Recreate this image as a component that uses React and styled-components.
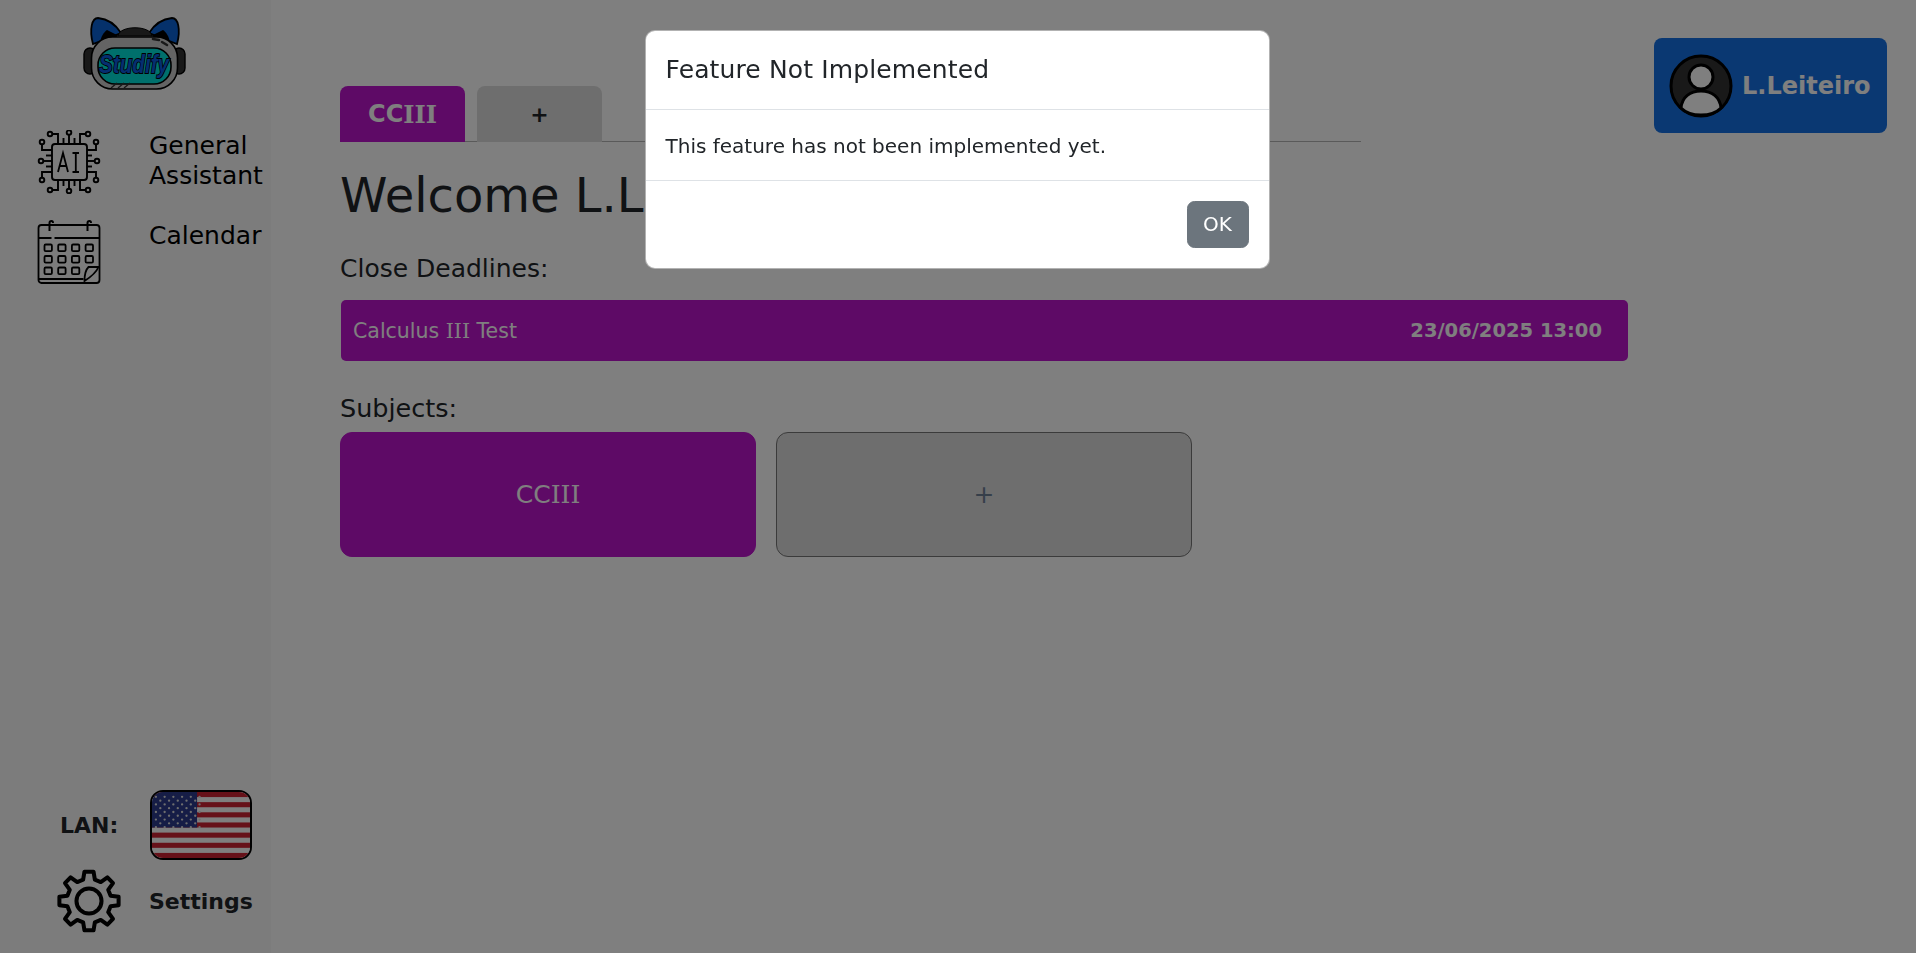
import styled, { createGlobalStyle } from 'styled-components'

const GlobalStyle = createGlobalStyle`
  html, body {
    margin: 0;
    padding: 0;
    height: 100%;
    background: #fff;
    font-family: "DejaVu Sans", Verdana, sans-serif;
    color: #212529;
  }
  * { box-sizing: border-box; }
`

function Logo() {
  return (
    <svg width="104" height="73" viewBox="0 0 104 73">
      <path d="M10 27 C6 12 9 1 15 1 C25 2 33 8 38 16 Z" fill="#0a62d6" stroke="#000" strokeWidth="1.8" />
      <path d="M94 27 C98 12 95 1 89 1 C79 2 71 8 66 16 Z" fill="#0a62d6" stroke="#000" strokeWidth="1.8" />
      <path d="M17 26 C18 19 21 15 24 13 L36 19 Z" fill="#000" />
      <path d="M87 26 C86 19 83 15 80 13 L68 19 Z" fill="#000" />
      <path d="M35 19 C36 8 68 8 69 19 Z" fill="#333" stroke="#000" />
      <rect x="1" y="31" width="12" height="26" rx="6" fill="#333" stroke="#000" strokeWidth="1.4" />
      <rect x="90" y="31" width="12" height="26" rx="6" fill="#333" stroke="#000" strokeWidth="1.4" />
      <rect x="8.5" y="20" width="86" height="52" rx="21" fill="#c8c8c8" stroke="#000" strokeWidth="1.6" />
      <rect x="15" y="31" width="73" height="36" rx="17" fill="#00e0d8" stroke="#000" strokeWidth="1.6" />
      <path d="M70 22 l6 1 M79 25 l5 3" stroke="#333" strokeWidth="2.6" strokeLinecap="round" />
      <path d="M28 71 l6 -5 M35 71 l6 -5 M41 71 l6 -5" stroke="#333" strokeWidth="1.4" />
      <text x="16" y="56" fontFamily="Liberation Sans, sans-serif" fontWeight="700" fontStyle="italic" fontSize="25" textLength="70" lengthAdjust="spacingAndGlyphs" fill="#0a5ce0" stroke="#000" strokeWidth="1.8" paintOrder="stroke">Studify</text>
    </svg>
  )
}

function AiChipIcon() {
  const pins = [
    'M14.5 4 H20 V14', 'M31 4.5 V14', 'M47.5 4 H42 V14', 'M25.5 8 V14', 'M36.5 8 V14',
    'M14.5 60 H20 V50', 'M31 59.5 V50', 'M47.5 60 H42 V50', 'M25.5 56 V50', 'M36.5 56 V50',
    'M4 14.5 V20 H14', 'M5.5 31 H14', 'M4 47.5 V42 H14', 'M8 25.5 H14', 'M8 36.5 H14',
    'M58 14.5 V20 H49', 'M56.5 31 H49', 'M58 47.5 V42 H49', 'M54 25.5 H49', 'M54 36.5 H49',
  ]
  const dots = [[12, 4], [31, 2.5], [50, 4], [4, 12], [58, 12], [3, 31], [59, 31], [4, 50], [58, 50], [12, 60], [31, 61], [50, 60]]
  return (
    <svg width="64" height="64" viewBox="0 0 62 64" fill="none" stroke="#000" strokeWidth="1.9">
      {pins.map((d) => <path key={d} d={d} />)}
      {dots.map(([cx, cy]) => <circle key={`${cx}-${cy}`} cx={cx} cy={cy} r="2.3" />)}
      <rect x="14" y="14" width="35" height="36" rx="3" />
      <path d="M20 42 L25 23 L30 42 M21.6 36 H28.4 M34.5 23 H41 M37.8 23 V42 M34.5 42 H41" strokeWidth="1.8" />
    </svg>
  )
}

function CalendarIcon() {
  const cells = []
  for (let row = 0; row < 3; row++) {
    for (let col = 0; col < 4; col++) {
      if (row === 2 && col === 3) continue
      cells.push(<rect key={`${row}-${col}`} x={7 + col * 13.7} y={24.5 + row * 11.5} width="7.4" height="6.6" rx="1.2" />)
    }
  }
  return (
    <svg width="64" height="64" viewBox="0 0 63 64" fill="none" stroke="#000" strokeWidth="1.8">
      <rect x="1" y="5" width="61" height="58" rx="3" />
      <path d="M1 18 H14 M17 18 H62" />
      <path d="M12 11 V3 Q12 1 14 1 Q15.5 1 15.5 3 M50 11 V3 Q50 1 52 1 Q53.5 1 53.5 3" strokeWidth="2" />
      {cells}
      <path d="M47 61 Q47 51 51 47 L61 47 Q58 54 47 61 Z" />
      <path d="M1 59 H46" />
    </svg>
  )
}

function GearIcon() {
  return (
    <svg width="64" height="64" viewBox="0 0 24 24" fill="none" stroke="#000" strokeWidth="1.5" strokeLinejoin="round">
      <path d="M10.3 1 H13.7 L14.2 4 L16.4 4.9 L18.9 3.1 L21 5.3 L19.2 7.8 L20.1 10 L23.1 10.4 V13.6 L20.1 14 L19.2 16.2 L21 18.7 L18.9 20.9 L16.4 19.1 L14.2 20 L13.7 23 H10.3 L9.8 20 L7.6 19.1 L5.1 20.9 L3 18.7 L4.8 16.2 L3.9 14 L.9 13.6 V10.4 L3.9 10 L4.8 7.8 L3 5.3 L5.1 3.1 L7.6 4.9 L9.8 4 Z" />
      <circle cx="12" cy="12" r="4.7" />
    </svg>
  )
}

function FlagIcon() {
  const stars = []
  for (let row = 0; row < 9; row++) {
    const count = row % 2 === 0 ? 6 : 5
    for (let col = 0; col < count; col++) {
      stars.push(<circle key={`${row}-${col}`} cx={(row % 2 === 0 ? 4 : 8.5) + col * 8.9} cy={5 + row * 3.9} r="1.2" fill="#ddd" />)
    }
  }
  return (
    <svg width="100%" height="100%" viewBox="0 0 100 68" preserveAspectRatio="none">
      <rect width="100" height="68" fill="#fff" />
      {[0, 2, 4, 6, 8, 10, 12].map((i) => <rect key={i} y={i * 5.23} width="100" height="5.23" fill="#cc2232" />)}
      <rect width="46" height="36.6" fill="#2c3a8c" />
      {stars}
    </svg>
  )
}

function AvatarIcon() {
  return (
    <svg width="64" height="64" viewBox="0 0 64 64">
      <circle cx="32" cy="32" r="30" fill="#333" stroke="#000" strokeWidth="3" />
      <circle cx="32" cy="23" r="12" fill="#fff" stroke="#000" strokeWidth="3" />
      <path d="M12 54 C13 43 21 37 32 37 C43 37 51 43 52 54 C47 59 40 61 32 61 C24 61 17 59 12 54 Z" fill="#fff" stroke="#000" strokeWidth="3" />
    </svg>
  )
}

function App() {
  return (
    <>
      <GlobalStyle />
      <Page>
        <Sidebar>
          <SidebarTop>
            <LogoRow><Logo /></LogoRow>
            <NavItem>
              <AiChipIcon />
              <NavLabel>General Assistant</NavLabel>
            </NavItem>
            <NavItem>
              <CalendarIcon />
              <NavLabel>Calendar</NavLabel>
            </NavItem>
          </SidebarTop>
          <SidebarBottom>
            <LanguageRow>
              <BoldLabel>LAN:</BoldLabel>
              <FlagFrame><FlagIcon /></FlagFrame>
            </LanguageRow>
            <SettingsRow>
              <GearIcon />
              <BoldLabel>Settings</BoldLabel>
            </SettingsRow>
          </SidebarBottom>
        </Sidebar>

        <Main>
          <Content>
            <TabBar>
              <Tab $active>CC<Numeral>III</Numeral></Tab>
              <Tab>+</Tab>
            </TabBar>
            <Welcome>Welcome L.Leiteiro</Welcome>
            <SectionLabel>Close Deadlines:</SectionLabel>
            <DeadlineBar>
              <span>Calculus <Numeral>III</Numeral> Test</span>
              <DeadlineDate>23/06/2025 13:00</DeadlineDate>
            </DeadlineBar>
            <SubjectsLabel>Subjects:</SubjectsLabel>
            <SubjectGrid>
              <SubjectCard $active>CC<Numeral>III</Numeral></SubjectCard>
              <SubjectCard>+</SubjectCard>
            </SubjectGrid>
          </Content>
          <UserButton>
            <AvatarIcon />
            <UserName>L.Leiteiro</UserName>
          </UserButton>
        </Main>
      </Page>

      <Backdrop />
      <ModalWrap>
        <Modal>
          <ModalHeader>Feature Not Implemented</ModalHeader>
          <ModalBody>This feature has not been implemented yet.</ModalBody>
          <ModalFooter>
            <OkButton>OK</OkButton>
          </ModalFooter>
        </Modal>
      </ModalWrap>
    </>
  )
}

export default App

const Page = styled.div`
  display: flex;
  height: 953px;
  overflow: hidden;
`

const Sidebar = styled.aside`
  width: 271px;
  flex-shrink: 0;
  display: flex;
  flex-direction: column;
  justify-content: space-between;
  background: #f8f8f8;
  padding: 17px 0 20px 37px;
`

const SidebarTop = styled.div`
  display: flex;
  flex-direction: column;
`

const LogoRow = styled.div`
  display: flex;
  padding-left: 46px;
  margin-bottom: 40px;
  height: 73px;
`

const NavItem = styled.div`
  display: flex;
  gap: 48px;
  height: 90px;
  color: #000;
  font-size: 25px;
  line-height: 30px;
`

const NavLabel = styled.span`
  width: 120px;
  padding-top: 1px;
`

const SidebarBottom = styled.div`
  display: flex;
  flex-direction: column;
  gap: 9px;
`

const BoldLabel = styled.span`
  font-size: 22px;
  font-weight: 700;
  color: #212529;
`

const LanguageRow = styled.div`
  display: flex;
  align-items: center;
  gap: 32px;
  padding-left: 23px;
`

const FlagFrame = styled.div`
  width: 102px;
  height: 70px;
  border: 2px solid #000;
  border-radius: 13px;
  overflow: hidden;
`

const SettingsRow = styled.div`
  display: flex;
  align-items: center;
  gap: 28px;
  padding-left: 20px;
`

const Main = styled.main`
  flex: 1;
  display: flex;
  align-items: flex-start;
  justify-content: space-between;
  padding: 38px 29px 0 69px;
`

const Content = styled.div`
  width: 1290px;
  padding-top: 48px;
`

const TabBar = styled.div`
  display: flex;
  gap: 12px;
  width: 1021px;
  height: 56px;
  border-bottom: 1.5px solid #b5b5b5;
`

const Tab = styled.div`
  width: 125px;
  height: 56px;
  display: flex;
  align-items: center;
  justify-content: center;
  border-radius: 8px 8px 0 0;
  font-size: ${(p) => (p.$active ? '24px' : '22px')};
  font-weight: 700;
  background: ${(p) => (p.$active ? '#bd14cc' : '#dcdcdc')};
  color: ${(p) => (p.$active ? '#fff' : '#212529')};
`

/* the roman numerals carry slab serifs in the reference */
const Numeral = styled.span`
  font-family: "DejaVu Serif", serif;
`

const Welcome = styled.h1`
  margin: 24px 0 0;
  font-size: 48px;
  font-weight: 400;
  line-height: 58px;
  color: #212529;
`

const SectionLabel = styled.div`
  margin-top: 30px;
  font-size: 25px;
  line-height: 30px;
  color: #212529;
`

const DeadlineBar = styled.div`
  margin: 16px 0 0 1px;
  width: 1287px;
  height: 61px;
  display: flex;
  align-items: center;
  justify-content: space-between;
  padding: 0 26px 0 12px;
  border-radius: 5px;
  background: #bd14cc;
  color: #fff;
  font-size: 20.5px;
`

const DeadlineDate = styled.span`
  font-size: 19.5px;
  font-weight: 700;
`

const SubjectsLabel = styled(SectionLabel)`
  margin-top: 32px;
  font-size: 25.5px;
`

const SubjectGrid = styled.div`
  margin-top: 9px;
  display: flex;
  gap: 20px;
`

const SubjectCard = styled.div`
  width: 416px;
  height: 125px;
  display: flex;
  align-items: center;
  justify-content: center;
  border-radius: 12px;
  font-size: 25px;
  background: ${(p) => (p.$active ? '#bd14cc' : '#dcdcdc')};
  color: ${(p) => (p.$active ? '#fff' : '#6c7f95')};
  border: 1.5px solid ${(p) => (p.$active ? '#bd14cc' : '#777')};
`

const UserButton = styled.div`
  width: 233px;
  height: 95px;
  display: flex;
  align-items: center;
  gap: 9px;
  padding-left: 15px;
  border-radius: 8px;
  background: #1470e4;
`

const UserName = styled.span`
  font-size: 24px;
  font-weight: 700;
  color: #fff;
`

const Backdrop = styled.div`
  position: fixed;
  inset: 0;
  background: #000;
  opacity: 0.5;
`

const ModalWrap = styled.div`
  position: fixed;
  inset: 0;
  display: flex;
  justify-content: center;
  align-items: flex-start;
  padding: 30px 2px 0 0;
`

const Modal = styled.div`
  width: 625px;
  background: #fff;
  border: 1px solid rgba(0, 0, 0, 0.3);
  border-radius: 10px;
  color: #212529;
`

const ModalHeader = styled.div`
  padding: 20px;
  font-size: 25px;
  letter-spacing: 0.13px;
  line-height: 37.5px;
  border-bottom: 1px solid #dee2e6;
`

const ModalBody = styled.div`
  padding: 21px 20px 19px;
  font-size: 20px;
  line-height: 30px;
`

const ModalFooter = styled.div`
  display: flex;
  justify-content: flex-end;
  padding: 20px;
  border-top: 1px solid #dee2e6;
`

const OkButton = styled.button`
  width: 62px;
  height: 47px;
  border: 1px solid #6c757d;
  border-radius: 7.5px;
  background: #6c757d;
  color: #fff;
  font-family: inherit;
  font-size: 20px;
`
